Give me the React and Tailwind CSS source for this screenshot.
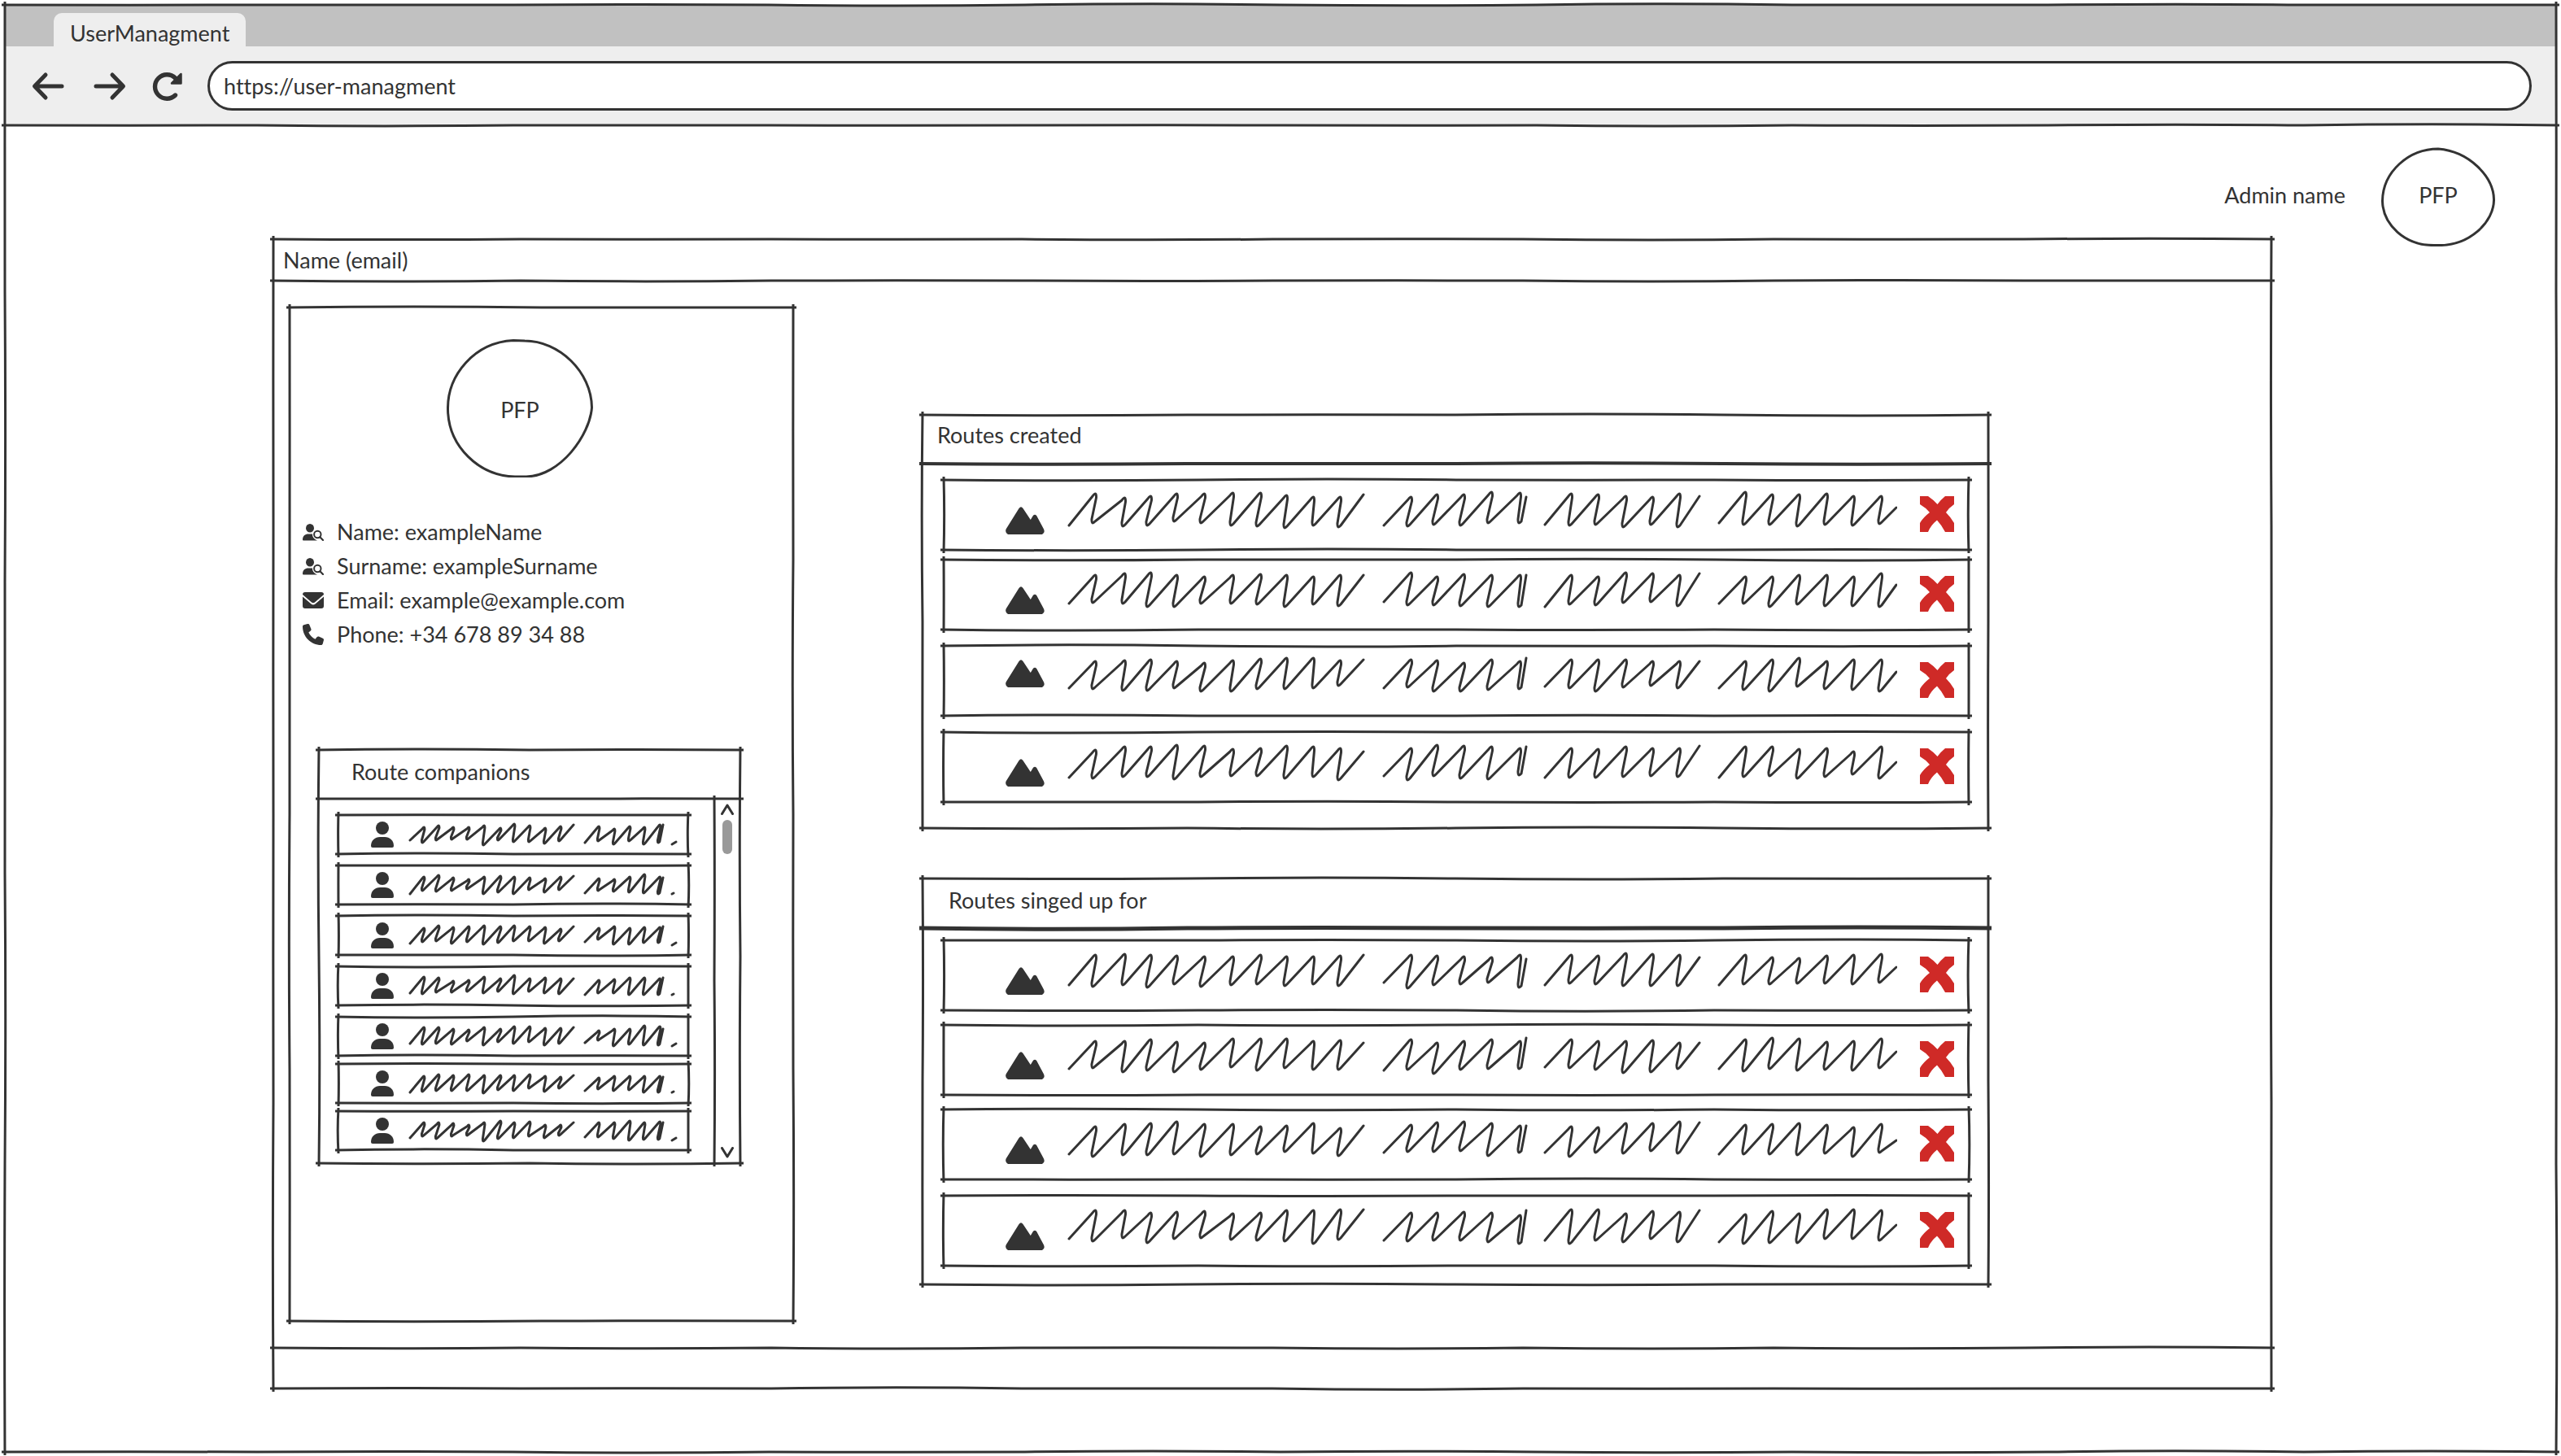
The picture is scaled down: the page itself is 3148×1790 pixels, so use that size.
import React from "react";
import { FaPhone } from "react-icons/fa6";

const INK = "#333333";

/* ---------- hand-drawn lines ---------- */

function bulge(seed, i) {
  const s = Math.sin(seed * 12.9898 + i * 78.233) * 43758.5453;
  return (s - Math.floor(s)) * 5 - 2.5;
}

function HLine({ seed = 1, parts = 4, weight = 3, className = "" }) {
  const step = 1000 / parts;
  let d = "M0 4";
  for (let i = 0; i < parts; i++) {
    d += ` Q${(i + 0.5) * step} ${4 + bulge(seed, i)} ${(i + 1) * step} 4`;
  }
  return (
    <svg aria-hidden="true" viewBox="0 0 1000 8" preserveAspectRatio="none" className={`pointer-events-none absolute -left-1 h-2 w-[calc(100%+8px)] ${className}`}>
      <path d={d} fill="none" stroke={INK} strokeWidth={weight} vectorEffect="non-scaling-stroke" />
    </svg>
  );
}

function VLine({ seed = 1, parts = 2, weight = 3, className = "" }) {
  const step = 1000 / parts;
  let d = "M4 0";
  for (let i = 0; i < parts; i++) {
    d += ` Q${4 + bulge(seed, i) * 0.7} ${(i + 0.5) * step} 4 ${(i + 1) * step}`;
  }
  return (
    <svg aria-hidden="true" viewBox="0 0 8 1000" preserveAspectRatio="none" className={`pointer-events-none absolute -top-1 h-[calc(100%+8px)] w-2 ${className}`}>
      <path d={d} fill="none" stroke={INK} strokeWidth={weight} vectorEffect="non-scaling-stroke" />
    </svg>
  );
}

function Frame({ seed, nx = 4, ny = 1 }) {
  return (
    <>
      <HLine seed={seed} parts={nx} className="-top-1" />
      <HLine seed={seed + 1} parts={nx} className="-bottom-1" />
      <VLine seed={seed + 2} parts={ny} className="-left-1" />
      <VLine seed={seed + 3} parts={ny} className="-right-1" />
    </>
  );
}

/* ---------- scribbled placeholder text ---------- */

function zigzag(xs, ys, k) {
  let d = `M${xs[0]} ${ys[0]}`;
  for (let i = 1; i < xs.length - 1; i++) {
    const x = xs[i];
    const y = ys[i];
    d +=
      i % 2
        ? ` L${x - 3 * k} ${y + 3 * k} Q${x + 2 * k} ${y - 4 * k} ${x + 1.5 * k} ${y + 5 * k}`
        : ` L${x - k} ${y - 5 * k} Q${x - 1.5 * k} ${y + 3 * k} ${x + 3 * k} ${y - 2 * k}`;
  }
  const n = xs.length - 1;
  return `${d} L${xs[n]} ${ys[n]}`;
}

const WORD_X = [
  [2, 34, 31, 70, 68, 102, 98, 134, 131, 168, 164, 203, 201, 237, 233, 269, 267, 302, 302, 335, 333, 364],
  [389, 422, 418, 454, 450, 487, 483, 521, 517, 556, 555, 564],
  [587, 619, 617, 652, 649, 686, 683, 719, 717, 752, 750, 777],
  [801, 833, 831, 866, 863, 899, 897, 933, 931, 966, 965, 1000, 998, 1019],
];

const CREATED = [
  {
    gap: "mt-0",
    lift: false,
    y: [
      [56, 17, 53, 22, 57, 20, 56, 17, 51, 17, 53, 16, 56, 16, 57, 19, 59, 21, 56, 21, 58, 18],
      [56, 21, 57, 18, 55, 18, 56, 15, 53, 16, 53, 21],
      [55, 17, 56, 18, 55, 20, 58, 21, 55, 17, 58, 20],
      [53, 15, 55, 18, 55, 18, 57, 17, 55, 20, 56, 20, 54, 34],
    ],
  },
  {
    gap: "mt-3",
    lift: false,
    y: [
      [54, 19, 53, 17, 54, 16, 58, 19, 58, 21, 54, 19, 54, 18, 55, 19, 58, 21, 55, 19, 57, 19],
      [52, 16, 56, 21, 56, 18, 57, 19, 58, 19, 58, 19],
      [58, 19, 55, 21, 56, 16, 53, 17, 52, 19, 57, 17],
      [54, 21, 54, 21, 58, 19, 55, 19, 57, 21, 57, 17, 58, 31],
    ],
  },
  {
    gap: "mt-5",
    lift: true,
    y: [
      [52, 19, 53, 18, 55, 17, 55, 19, 52, 21, 56, 18, 56, 16, 53, 15, 53, 15, 52, 18, 49, 17],
      [52, 17, 51, 18, 56, 21, 56, 17, 54, 19, 53, 15],
      [50, 17, 52, 17, 56, 17, 51, 19, 49, 19, 52, 19],
      [52, 19, 54, 17, 56, 15, 50, 19, 53, 17, 54, 17, 56, 32],
    ],
  },
  {
    gap: "mt-5",
    lift: false,
    y: [
      [56, 22, 57, 18, 55, 18, 55, 16, 58, 17, 55, 21, 54, 20, 54, 17, 57, 18, 55, 20, 59, 24],
      [54, 20, 59, 16, 54, 17, 57, 18, 58, 20, 53, 18],
      [56, 20, 56, 21, 56, 18, 55, 20, 54, 20, 55, 17],
      [56, 18, 55, 18, 54, 21, 57, 20, 55, 24, 52, 18, 57, 37],
    ],
  },
];

const SIGNED_UP = [
  {
    gap: "mt-0",
    lift: false,
    y: [
      [55, 18, 57, 17, 55, 18, 58, 19, 54, 20, 57, 20, 55, 18, 54, 20, 56, 20, 54, 19, 56, 18],
      [52, 18, 59, 19, 55, 20, 54, 21, 52, 18, 58, 23],
      [55, 18, 53, 19, 54, 16, 56, 17, 56, 18, 56, 21],
      [55, 18, 54, 21, 54, 22, 53, 19, 53, 18, 54, 17, 52, 33],
    ],
  },
  {
    gap: "mt-[18px]",
    lift: false,
    y: [
      [54, 20, 53, 20, 58, 18, 56, 21, 58, 22, 55, 17, 52, 17, 56, 17, 53, 20, 55, 19, 55, 22],
      [56, 18, 55, 22, 60, 20, 55, 18, 54, 20, 54, 16],
      [52, 18, 53, 20, 55, 20, 59, 19, 58, 22, 54, 22],
      [54, 18, 57, 16, 54, 17, 56, 21, 55, 20, 56, 17, 53, 33],
    ],
  },
  {
    gap: "mt-[18px]",
    lift: false,
    y: [
      [55, 21, 58, 18, 56, 17, 56, 15, 55, 18, 58, 18, 56, 21, 55, 20, 52, 17, 54, 23, 57, 20],
      [53, 19, 52, 16, 52, 15, 51, 17, 57, 20, 53, 20],
      [53, 21, 58, 22, 53, 17, 54, 17, 51, 15, 54, 16],
      [55, 19, 55, 18, 55, 17, 56, 19, 54, 22, 58, 18, 53, 38],
    ],
  },
  {
    gap: "mt-5",
    lift: false,
    y: [
      [53, 18, 56, 18, 52, 21, 58, 20, 53, 19, 52, 22, 54, 21, 55, 18, 56, 18, 59, 17, 54, 17],
      [55, 21, 56, 21, 55, 20, 55, 21, 57, 24, 59, 18],
      [55, 17, 59, 17, 55, 22, 57, 19, 53, 20, 57, 18],
      [57, 23, 59, 19, 58, 22, 58, 17, 53, 17, 53, 18, 55, 36],
    ],
  },
];

/* ---------- icons ---------- */

const Mountain = () => (
  <svg aria-hidden="true" viewBox="0 0 48 34" className="h-[34px] w-12 shrink-0">
    <path d="M16.5 2Q19 -1.6 21.5 2L30.8 16L33.8 11Q36 8.6 38.2 11L47 27.5Q49 32 45 34H3Q-1 32 .6 27.5Z" fill={INK} />
  </svg>
);

const Cross = () => (
  <svg aria-hidden="true" viewBox="0 0 42 44" className="h-11 w-[42px]">
    <path d="M0 0H10Q16 4 21.5 10Q26 4 31 0H42V10Q36 14 32 20Q38 26 42 33V44H31Q27 36 21 29.500Q13 36 10 44H0V33Q4 26 12 20Q7 14 0 10Z" fill="#cf2a27" />
  </svg>
);

const Person = () => (
  <svg aria-hidden="true" viewBox="0 0 28 32" className="h-8 w-7 shrink-0">
    <circle cx="14" cy="8" r="8" fill={INK} />
    <path d="M0 30C0 23 5 19 11 19H17C23 19 28 23 28 30Q28 32 26 32H2Q0 32 0 30Z" fill={INK} />
  </svg>
);

const PersonSearch = () => (
  <svg aria-hidden="true" viewBox="0 0 26 21" className="h-[21px] w-[26px]">
    <ellipse cx="9" cy="5.200" rx="5" ry="5.200" fill={INK} />
    <path d="M0 19.500C0 15 3 12.500 7 12.500H12Q11.500 17.500 18 20.500H1Q0 20.500 0 19.500Z" fill={INK} />
    <circle cx="18.300" cy="13" r="4.200" fill="#fff" stroke={INK} strokeWidth="2" />
    <path d="M21.300 16.200L25 20" stroke={INK} strokeWidth="2.200" strokeLinecap="round" />
  </svg>
);

const Mail = () => (
  <svg aria-hidden="true" viewBox="0 0 26 20" className="h-5 w-[26px]">
    <path d="M0 3Q0 0 3 0H23Q26 0 26 3L15 12.500Q13 14 11 12.500Z" fill={INK} />
    <path d="M0 5.500L10.500 14.500Q13 16.300 15.500 14.500L26 5.500V17Q26 20 23 20H3Q0 20 0 17Z" fill={INK} />
  </svg>
);

const stroke = { fill: "none", stroke: INK, strokeLinecap: "round", strokeLinejoin: "round" };

const Arrow = ({ flip }) => (
  <svg aria-hidden="true" viewBox="0 0 40 36" className={flip ? "h-9 w-10 -scale-x-100" : "h-9 w-10"}>
    <path d="M37 18H4M17 4L3.500 18L17 32" {...stroke} strokeWidth="5" />
  </svg>
);

const Reload = () => (
  <svg aria-hidden="true" viewBox="0 0 38 36" className="h-9 w-[38px]">
    <path d="M28.500 29A14.700 14.700 0 1 1 28.500 8" {...stroke} strokeWidth="5.400" />
    <path d="M24 14.500L35.500 3V14.500Z" {...stroke} fill={INK} strokeWidth="2.500" />
  </svg>
);

/* ---------- building blocks ---------- */

function RouteRow({ route, seed, n }) {
  return (
    <li className={`relative flex h-[86px] items-start gap-7 pr-[18px] pl-[76px] ${route.gap}`}>
      <Frame seed={seed} nx={4} />
      <div className={route.lift ? "pt-[17px]" : "pt-[33px]"}>
        <Mountain />
      </div>
      <svg aria-hidden="true" viewBox="0 0 1020 86" preserveAspectRatio="none" className="h-full min-w-0 flex-1">
        {WORD_X.map((xs, i) => (
          <path key={i} d={zigzag(xs, route.y[i], 1)} {...stroke} strokeWidth="3" />
        ))}
      </svg>
      <button type="button" aria-label={`Remove route ${n}`} className="mt-5 h-11 w-[42px] shrink-0">
        <Cross />
      </button>
    </li>
  );
}

function RouteCard({ title, routes, seed, titleClass, listClass, weight }) {
  return (
    <section className="relative">
      <Frame seed={seed} nx={4} ny={2} />
      <h2 className={`relative flex items-start ${titleClass}`}>
        {title}
        <HLine seed={seed + 7} parts={4} weight={weight} className="-bottom-1" />
      </h2>
      <ul className={`pr-6 pl-[26px] ${listClass}`}>
        {routes.map((r, i) => (
          <RouteRow key={i} route={r} seed={seed + 10 + i * 5} n={i + 1} />
        ))}
      </ul>
    </section>
  );
}

const NAME_X = [4, 21, 19, 39, 36, 57, 55, 76, 74, 95, 94, 115, 112, 132, 131, 151, 150, 170, 169, 189, 187, 205];
const NAME_Y = [33, 14, 32, 14, 32, 16, 32, 15, 31, 13, 35, 14, 32, 13, 33, 13, 32, 15, 34, 15, 32, 14];
const LAST_X = [219, 236, 235, 255, 254, 274, 273, 292, 291, 311, 309, 315];
const LAST_Y = [33, 15, 31, 15, 34, 14, 34, 13, 34, 13, 35, 14];

function Companion({ seed, gap }) {
  const shift = (arr, o) => arr.map((v, i) => v + Math.round(bulge(seed + o, i) * 0.8));
  return (
    <li className={`relative flex h-12 items-start pl-10 ${gap}`}>
      <Frame seed={seed} nx={2} />
      <div className="pt-2">
        <Person />
      </div>
      <svg aria-hidden="true" viewBox="0 0 340 48" preserveAspectRatio="none" className="ml-4 h-full w-[340px]">
        <path d={zigzag(NAME_X, shift(NAME_Y, 3), 0.6)} {...stroke} strokeWidth="3" />
        <path d={zigzag(LAST_X, shift(LAST_Y, 9), 0.6)} {...stroke} strokeWidth="3" />
        <path d={seed % 2 ? "M326 36L331 33" : "M326 35L328 34"} {...stroke} strokeWidth="3" />
      </svg>
    </li>
  );
}

const COMPANION_GAPS = ["mt-0", "mt-3.5", "mt-3.5", "mt-3.5", "mt-3.5", "mt-2.5", "mt-2.5"];

const DETAILS = [
  { icon: <PersonSearch />, text: "Name: exampleName" },
  { icon: <PersonSearch />, text: "Surname: exampleSurname" },
  { icon: <Mail />, text: "Email: example@example.com" },
  { icon: <FaPhone size={26} color={INK} aria-hidden="true" />, text: "Phone: +34 678 89 34 88" },
];

export default function App() {
  return (
    <div className="flex min-h-screen flex-col bg-white px-1.5 pt-1.5 pb-[5px] font-['Lato',sans-serif] text-[27px] leading-[42px] text-[#333333] [font-variant-ligatures:none]">
      <div className="relative flex flex-1 flex-col">
        <header>
          <div className="flex h-[51px] items-end bg-[#c1c1c1] pl-[60px]">
            <div className="flex h-[41px] items-center rounded-t-[10px] bg-[#eeeeee] px-5 pt-2">UserManagment</div>
          </div>
          <nav className="relative flex h-[97px] items-center bg-[#eeeeee] pr-[30px] pl-[33px]">
            <button type="button" aria-label="Back"><Arrow /></button>
            <button type="button" aria-label="Forward" className="ml-9"><Arrow flip /></button>
            <button type="button" aria-label="Reload" className="ml-8"><Reload /></button>
            <input
              type="text"
              aria-label="Address"
              defaultValue="https://user-managment"
              className="ml-[30px] h-[61px] min-w-0 flex-1 rounded-full border-3 border-[#333333] bg-white pl-[17px] outline-none"
            />
            <HLine seed={21} parts={10} className="-bottom-1" />
          </nav>
        </header>

        <div className="flex items-center justify-end gap-11 pt-[27px] pr-[75px]">
          <span className="pb-1">Admin name</span>
          <div className="relative grid h-[122px] w-[140px] place-items-center pb-1">
            <svg aria-hidden="true" viewBox="0 0 140 122" className="absolute inset-0 h-full w-full">
              <path d="M70 2C108 5 138 36 138.500 64C139 92 108 122 68 120.500C28 122 2 94 1.500 66C2 30 34 2 70 2Z" {...stroke} strokeWidth="3" />
            </svg>
            <span>PFP</span>
          </div>
        </div>

        <main className="relative -mt-[9px] mr-[350px] mb-[78px] ml-[330px] flex flex-1 flex-col">
          <Frame seed={31} nx={8} ny={4} />
          <h1 className="relative flex h-[51px] items-center pl-3">
            Name (email)
            <HLine seed={41} parts={8} className="-bottom-1" />
          </h1>

          <div className="flex flex-1 py-[33px] pr-[348px] pl-5">
            <aside className="relative flex w-[619px] shrink-0 flex-col pt-[39px]">
              <Frame seed={51} nx={2} ny={4} />
              <div className="relative ml-[193px] grid h-[170px] w-[180px] place-items-center pt-1">
                <svg aria-hidden="true" viewBox="0 0 180 170" className="absolute inset-0 h-full w-full">
                  <path d="M82 1.500C34 4 1 44 1.500 86C2 132 40 168 84 169H98C140 168 176 118 178.500 84C178 40 138 2 96 2Z" {...stroke} strokeWidth="3" />
                </svg>
                <span>PFP</span>
              </div>

              <ul className="mt-[46px] pl-4">
                {DETAILS.map((d) => (
                  <li key={d.text} className="flex h-[42px] items-center gap-4">
                    {d.icon}
                    <span>{d.text}</span>
                  </li>
                ))}
              </ul>

              <section className="relative mt-[121px] ml-9 w-[518px]">
                <Frame seed={61} nx={2} ny={2} />
                <h2 className="relative h-[60px] pt-1.5 pl-10">
                  Route companions
                  <HLine seed={71} parts={2} className="-bottom-1" />
                </h2>
                <div className="flex">
                  <ul className="flex-1 pt-5 pr-8 pb-4 pl-6">
                    {COMPANION_GAPS.map((gap, i) => (
                      <Companion key={i} seed={81 + i * 5} gap={gap} />
                    ))}
                  </ul>
                  <div className="relative flex w-8 flex-col items-center gap-1.5 py-1.5">
                    <VLine seed={77} parts={2} className="-left-1" />
                    <button type="button" aria-label="Scroll up" className="h-3.5">
                      <svg aria-hidden="true" viewBox="0 0 16 14" className="h-3.5 w-4">
                        <path d="M1.500 12.500L8 2L14.500 12.500" {...stroke} strokeWidth="3" />
                      </svg>
                    </button>
                    <div className="h-[42px] w-3 rounded-full bg-[#999999]" />
                    <button type="button" aria-label="Scroll down" className="mt-auto h-3.5">
                      <svg aria-hidden="true" viewBox="0 0 16 14" className="h-3.5 w-4">
                        <path d="M1.500 1.500L8 12L14.500 1.500" {...stroke} strokeWidth="3" />
                      </svg>
                    </button>
                  </div>
                </div>
              </section>
            </aside>

            <div className="ml-[159px] flex min-w-0 flex-1 flex-col gap-[62px] pt-[132px]">
              <RouteCard title="Routes created" routes={CREATED} seed={131} weight={4} titleClass="h-[60px] pt-1 pl-[18px]" listClass="pt-5 pb-8" />
              <RouteCard title="Routes singed up for" routes={SIGNED_UP} seed={171} weight={5} titleClass="h-[61px] pt-1.5 pl-8" listClass="pt-[15px] pb-[23px]" />
            </div>
          </div>

          <footer className="relative h-[50px]">
            <HLine seed={45} parts={8} className="-top-1" />
          </footer>
        </main>

        <Frame seed={3} nx={10} ny={5} />
      </div>
    </div>
  );
}
